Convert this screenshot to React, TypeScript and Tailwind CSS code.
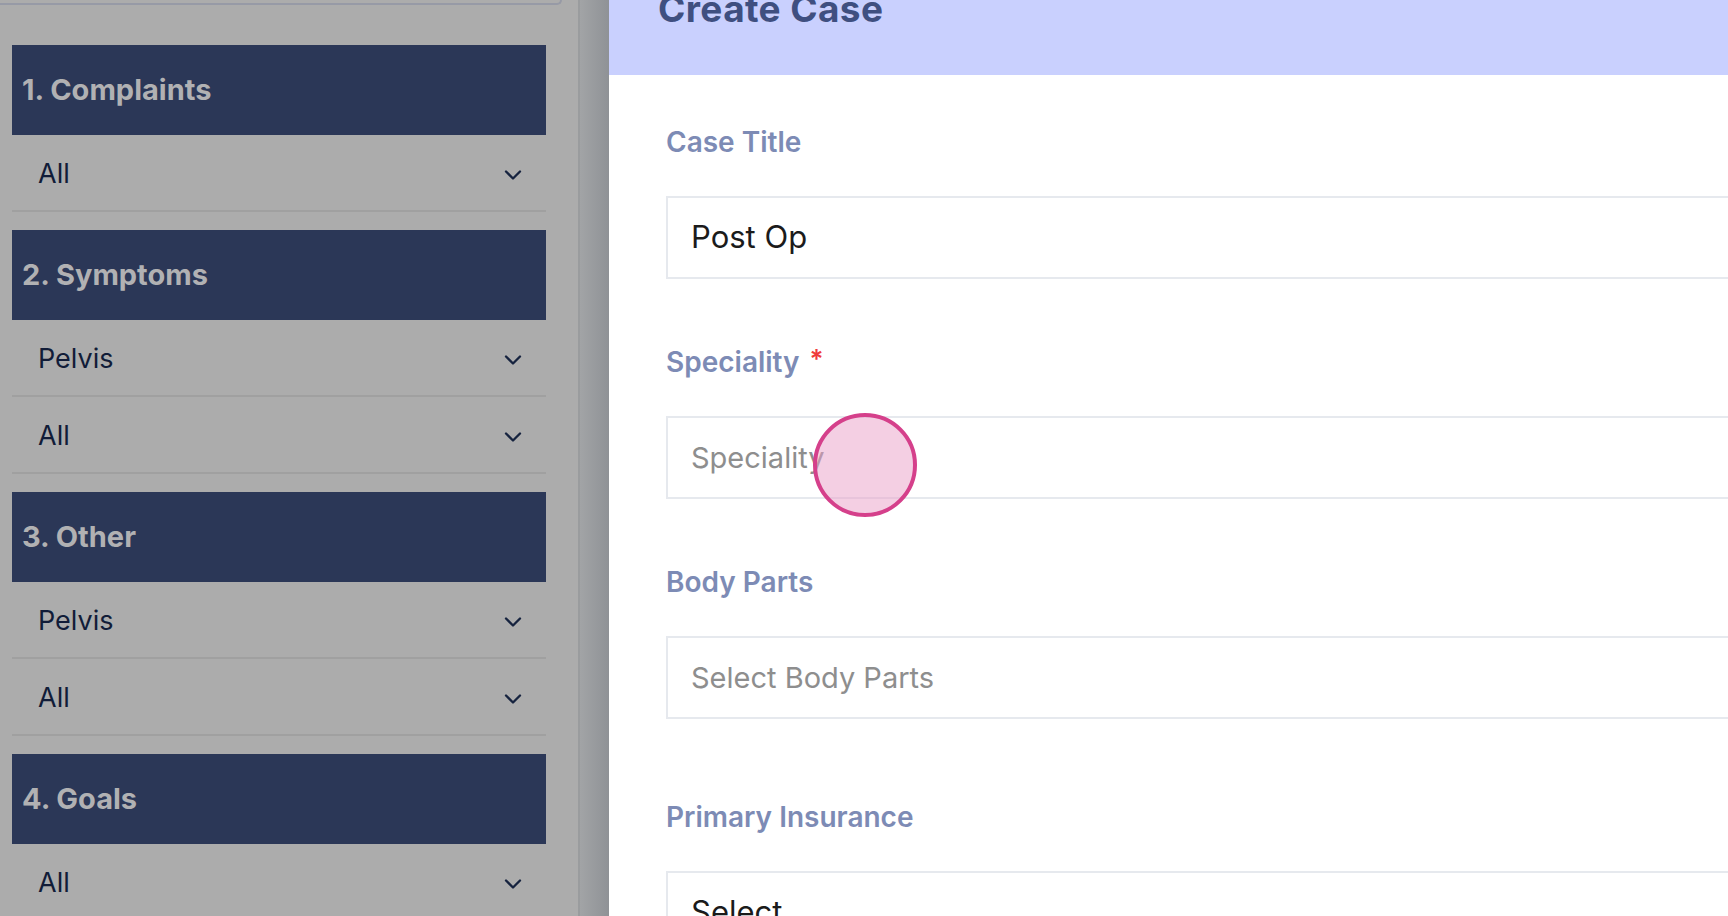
import React from "react";
import { ChevronDown } from "lucide-react";

const font = { fontFamily: "Inter, 'Noto Sans', sans-serif" };

function Header({ title }: { title: string }) {
  return (
    <div className="h-[90px] bg-[#2b3757] flex items-center pl-[10px]">
      <span className="text-[29px] font-bold text-[#b1b1b3] tracking-[0px]">{title}</span>
    </div>
  );
}

function Row({ label }: { label: string }) {
  return (
    <div className="h-[77px] border-b-2 border-[#a0a0a0] flex items-center justify-between pl-[26px] pr-[19px] pt-[4px]">
      <span className="text-[27px] text-[#111c38]">{label}</span>
      <ChevronDown size={28} strokeWidth={2} color="#16233f" />
    </div>
  );
}

function Group({ title, rows }: { title: string; rows: string[] }) {
  return (
    <div className="mb-[18px]">
      <Header title={title} />
      {rows.map((r, i) => (
        <Row key={i} label={r} />
      ))}
    </div>
  );
}

function Field({
  label,
  required,
  value,
  placeholder,
  gapTop,
}: {
  label: string;
  required?: boolean;
  value?: string;
  placeholder?: string;
  gapTop: string;
}) {
  return (
    <div className={gapTop}>
      <div className="h-[40px] flex items-center">
        <span className="text-[28px] font-semibold text-[#7d8bb5]">{label}</span>
        {required && <span className="text-[26px] font-semibold text-[#ef3b3b] ml-[10px] -mt-[8px]">*</span>}
      </div>
      <div className="mt-[34px] w-[1300px] h-[83px] border-2 border-[#e6e9ee] flex items-center pl-[23px]">
        {value ? (
          <span className="text-[31px] text-[#1b1b1b]">{value}</span>
        ) : (
          <span className="text-[29px] text-[#8e8e8e]">{placeholder}</span>
        )}
      </div>
    </div>
  );
}

export default function App() {
  return (
    <div className="relative w-[1728px] h-[916px] overflow-hidden flex" style={font}>
      {/* left dimmed sidebar */}
      <div className="w-[578px] h-full bg-[#acacac] flex flex-col">
        <div className="h-[5px] w-[562px] border-b-2 border-r-2 border-[#979aa6] rounded-br-[12px] shrink-0" />
        <div className="mt-[40px] pl-[12px] w-[546px]">
          <Group title="1. Complaints" rows={["All"]} />
          <Group title="2. Symptoms" rows={["Pelvis", "All"]} />
          <Group title="3. Other" rows={["Pelvis", "All"]} />
          <Group title="4. Goals" rows={["All"]} />
        </div>
      </div>
      <div className="w-[31px] h-full border-l-2 border-[#9a9c9e] bg-gradient-to-r from-[#a2a4a6] to-[#8f9296]" />

      {/* right modal */}
      <div className="flex-1 h-full bg-white overflow-hidden flex flex-col">
        <div className="h-[75px] shrink-0 bg-[#c9d0fe] pl-[49px]">
          <div className="-mt-[9px] text-[37px] leading-[36px] font-bold text-[#3f4f80] tracking-[0.4px]">Create Case</div>
        </div>
        <div className="pl-[57px] pt-[47px]">
          <Field label="Case Title" value="Post Op" gapTop="" />
          <Field label="Speciality" required placeholder="Speciality" gapTop="mt-[63px]" />
          <Field label="Body Parts" placeholder="Select Body Parts" gapTop="mt-[63px]" />
          <Field label="Primary Insurance" value="Select" gapTop="mt-[78px]" />
        </div>
      </div>

      {/* click marker */}
      <div className="absolute left-[813px] top-[413px] w-[104px] h-[104px] rounded-full border-[4px] border-[#d5408b] bg-[rgba(233,160,199,0.5)]" />
    </div>
  );
}
